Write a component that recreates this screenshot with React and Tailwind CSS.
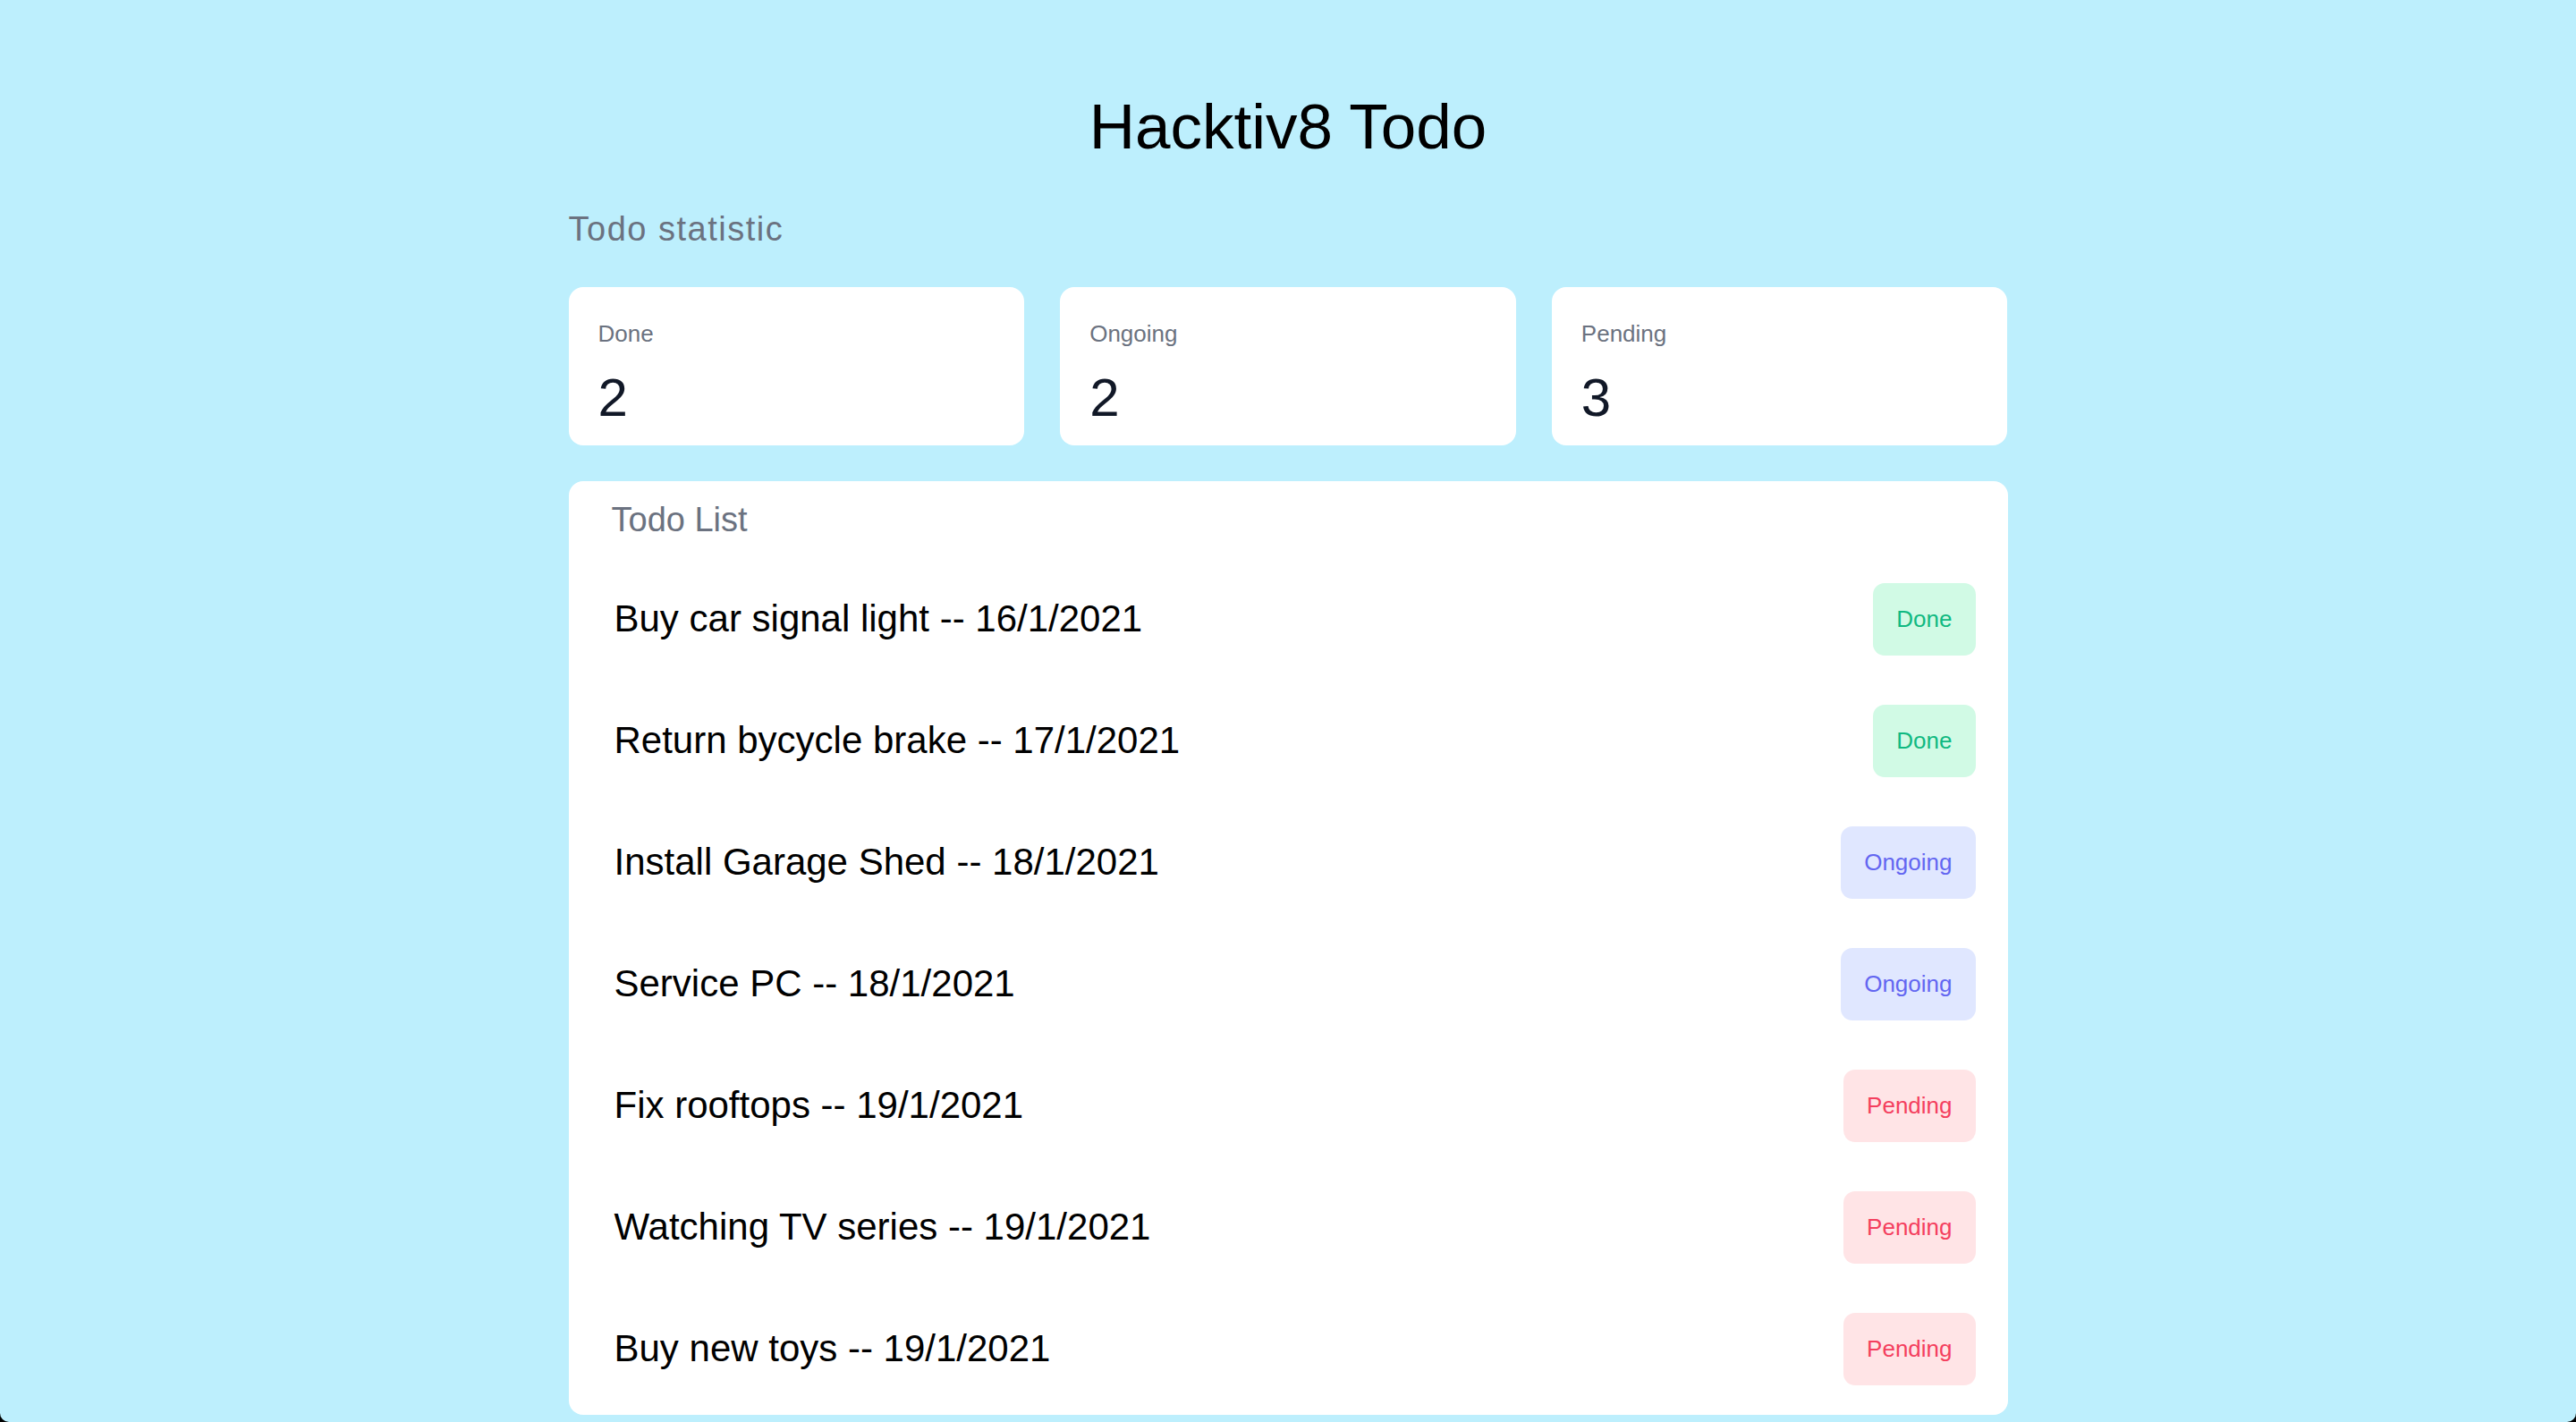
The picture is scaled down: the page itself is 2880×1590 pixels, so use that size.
import React from "react";

const stats = [
  { label: "Done", value: 2 },
  { label: "Ongoing", value: 2 },
  { label: "Pending", value: 3 },
];

const todos = [
  { text: "Buy car signal light -- 16/1/2021", status: "Done" },
  { text: "Return bycycle brake -- 17/1/2021", status: "Done" },
  { text: "Install Garage Shed -- 18/1/2021", status: "Ongoing" },
  { text: "Service PC -- 18/1/2021", status: "Ongoing" },
  { text: "Fix rooftops -- 19/1/2021", status: "Pending" },
  { text: "Watching TV series -- 19/1/2021", status: "Pending" },
  { text: "Buy new toys -- 19/1/2021", status: "Pending" },
];

const badgeStyles = {
  Done: "bg-[#d1fae5] text-[#10b981]",
  Ongoing: "bg-[#e0e7ff] text-[#6366f1]",
  Pending: "bg-[#ffe4e6] text-[#f43f5e]",
};

function Badge({ status }) {
  return (
    <span
      className={`flex h-[81px] items-center rounded-[13px] px-[26px] text-[26px] leading-none ${badgeStyles[status]}`}
      style={{ fontFamily: '"Liberation Sans", Arial, sans-serif' }}
    >
      {status}
    </span>
  );
}

export default function App() {
  return (
    <div className="h-[1590px] w-full overflow-hidden bg-black">
      <div
        className="h-[1590px] w-full rounded-b-[10px] bg-[#bdeffd]"
        style={{ fontFamily: '"Liberation Sans", Arial, sans-serif' }}
      >
        <div className="mx-auto flex w-[1609px] flex-col pt-[106px]">
          <h1 className="text-center text-[71px] font-normal leading-none text-black">
            Hacktiv8 Todo
          </h1>
          <h2 className="mt-[60px] text-[38px] leading-none tracking-[1.5px] text-[#6b7280]">
            Todo statistic
          </h2>
          <div className="mt-[46px] grid grid-cols-3 gap-[40px]">
            {stats.map((s) => (
              <div
                key={s.label}
                className="flex flex-col rounded-[16px] bg-white pl-[33px] pr-[33px] pt-[39px] pb-[23px]"
              >
                <span className="text-[26px] leading-none text-[#6b7280]">
                  {s.label}
                </span>
                <span className="mt-[29px] text-[60px] leading-none text-[#111827]">
                  {s.value}
                </span>
              </div>
            ))}
          </div>
          <div className="mt-[40px] flex h-[1044px] flex-col rounded-[16px] bg-white pt-[24px]">
            <h3 className="pl-[48px] text-[38px] leading-none text-[#6b7280]">
              Todo List
            </h3>
            <ul className="mt-[24px] flex flex-col">
              {todos.map((t) => (
                <li
                  key={t.text}
                  className="flex h-[136px] items-center justify-between pl-[51px] pr-[36px]"
                >
                  <span className="text-[42px] leading-none text-black">
                    {t.text}
                  </span>
                  <Badge status={t.status} />
                </li>
              ))}
            </ul>
          </div>
        </div>
      </div>
    </div>
  );
}
